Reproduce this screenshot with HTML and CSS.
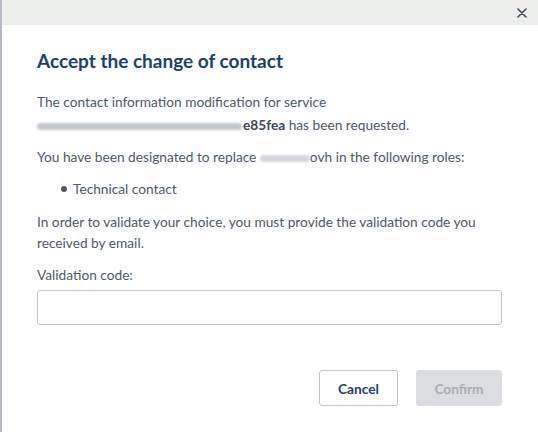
FILE: index.html
```
<!DOCTYPE html>
<html>
<head>
<meta charset="utf-8">
<link rel="stylesheet" href="styles.css">
</head>
<body>
<div class="modal">
  <div class="modal-header">
    <button class="close" aria-label="Close">
      <svg width="10" height="10" viewBox="0 0 10 10"><path d="M1 1L9 9M9 1L1 9" stroke="#3d4a5c" stroke-width="1.6" stroke-linecap="round"/></svg>
    </button>
  </div>
  <div class="modal-body">
    <h1 class="title">Accept the change of contact</h1>
    <p class="para">The contact information modification for service<span class="line2"><span class="blur blur-long"></span><strong>e85fea</strong> has been requested.</span></p>
    <p class="para">You have been designated to replace <span class="blur blur-short"></span>ovh in the following roles:</p>
    <ul class="roles">
      <li>Technical contact</li>
    </ul>
    <p class="para">In order to validate your choice, you must provide the validation code you received by email.</p>
    <label class="label" for="code">Validation code:</label>
    <input class="input" id="code" type="text">
  </div>
  <div class="modal-footer">
    <button class="btn btn-cancel">Cancel</button>
    <button class="btn btn-confirm" disabled>Confirm</button>
  </div>
</div>
</body>
</html>
```
FILE: styles.css
```
html, body {
  margin: 0;
  padding: 0;
  background: #ffffff;
}
body {
  font-family: "Lato", "Open Sans", sans-serif;
  width: 538px;
  height: 432px;
  overflow: hidden;
}
.modal {
  position: relative;
  height: 432px;
  box-sizing: border-box;
  border-left: 2px solid #b3bac4;
  background: #fff;
}
.modal-header {
  height: 25px;
  background: #eceeec;
  display: flex;
  justify-content: flex-end;
  align-items: center;
  padding-right: 10px;
}
.close {
  border: 0;
  background: transparent;
  padding: 0;
  width: 12px;
  height: 12px;
  display: flex;
  align-items: center;
  justify-content: center;
  margin-top: 1px;
}
.modal-body {
  padding: 24px 35px 0 35px;
}
.title {
  margin: 0 0 18px 0;
  font-size: 19px;
  font-weight: 700;
  color: #1b426e;
  line-height: 24px;
}
.para {
  margin: 0 0 11px 0;
  font-size: 13.7px;
  line-height: 21px;
  color: #4d5969;
}
.line2 {
  display: block;
  padding-top: 2px;
}
.para strong {
  color: #3b4656;
  font-weight: 700;
}
.blur {
  display: inline-block;
  height: 7px;
  border-radius: 4px;
  background: #c3c8cf;
  filter: blur(1.3px);
  vertical-align: middle;
}
.blur-long {
  width: 205px;
  margin-right: 1px;
}
.blur-short {
  width: 50px;
  background: #d3d7dc;
}
.roles {
  margin: 0 0 12px 0;
  padding: 0 0 0 36px;
  font-size: 13.7px;
  line-height: 21px;
  color: #4d5969;
  list-style: none;
}
.roles li {
  position: relative;
}
.roles li::before {
  content: "";
  position: absolute;
  left: -12px;
  top: 8px;
  width: 6px;
  height: 6px;
  border-radius: 50%;
  background: #4d5969;
}
.label {
  display: block;
  font-size: 13.7px;
  line-height: 21px;
  color: #4d5969;
  margin-bottom: 5px;
}
.input {
  display: block;
  width: 465px;
  height: 35px;
  box-sizing: border-box;
  border: 1px solid #c3c7cc;
  border-radius: 3px;
  padding: 0 8px;
  font-family: inherit;
  font-size: 13px;
}
.modal-footer {
  display: flex;
  justify-content: flex-end;
  gap: 18px;
  padding: 45px 36px 0 0;
}
.btn {
  height: 36px;
  border-radius: 3px;
  font-family: inherit;
  font-size: 13.7px;
  font-weight: 700;
  padding: 0;
}
.btn-cancel {
  width: 79px;
  background: #fff;
  border: 1px solid #bfc4ca;
  color: #1b426e;
}
.btn-confirm {
  width: 86px;
  background: #dcdde0;
  border: 0;
  color: #a9adb2;
}
```
